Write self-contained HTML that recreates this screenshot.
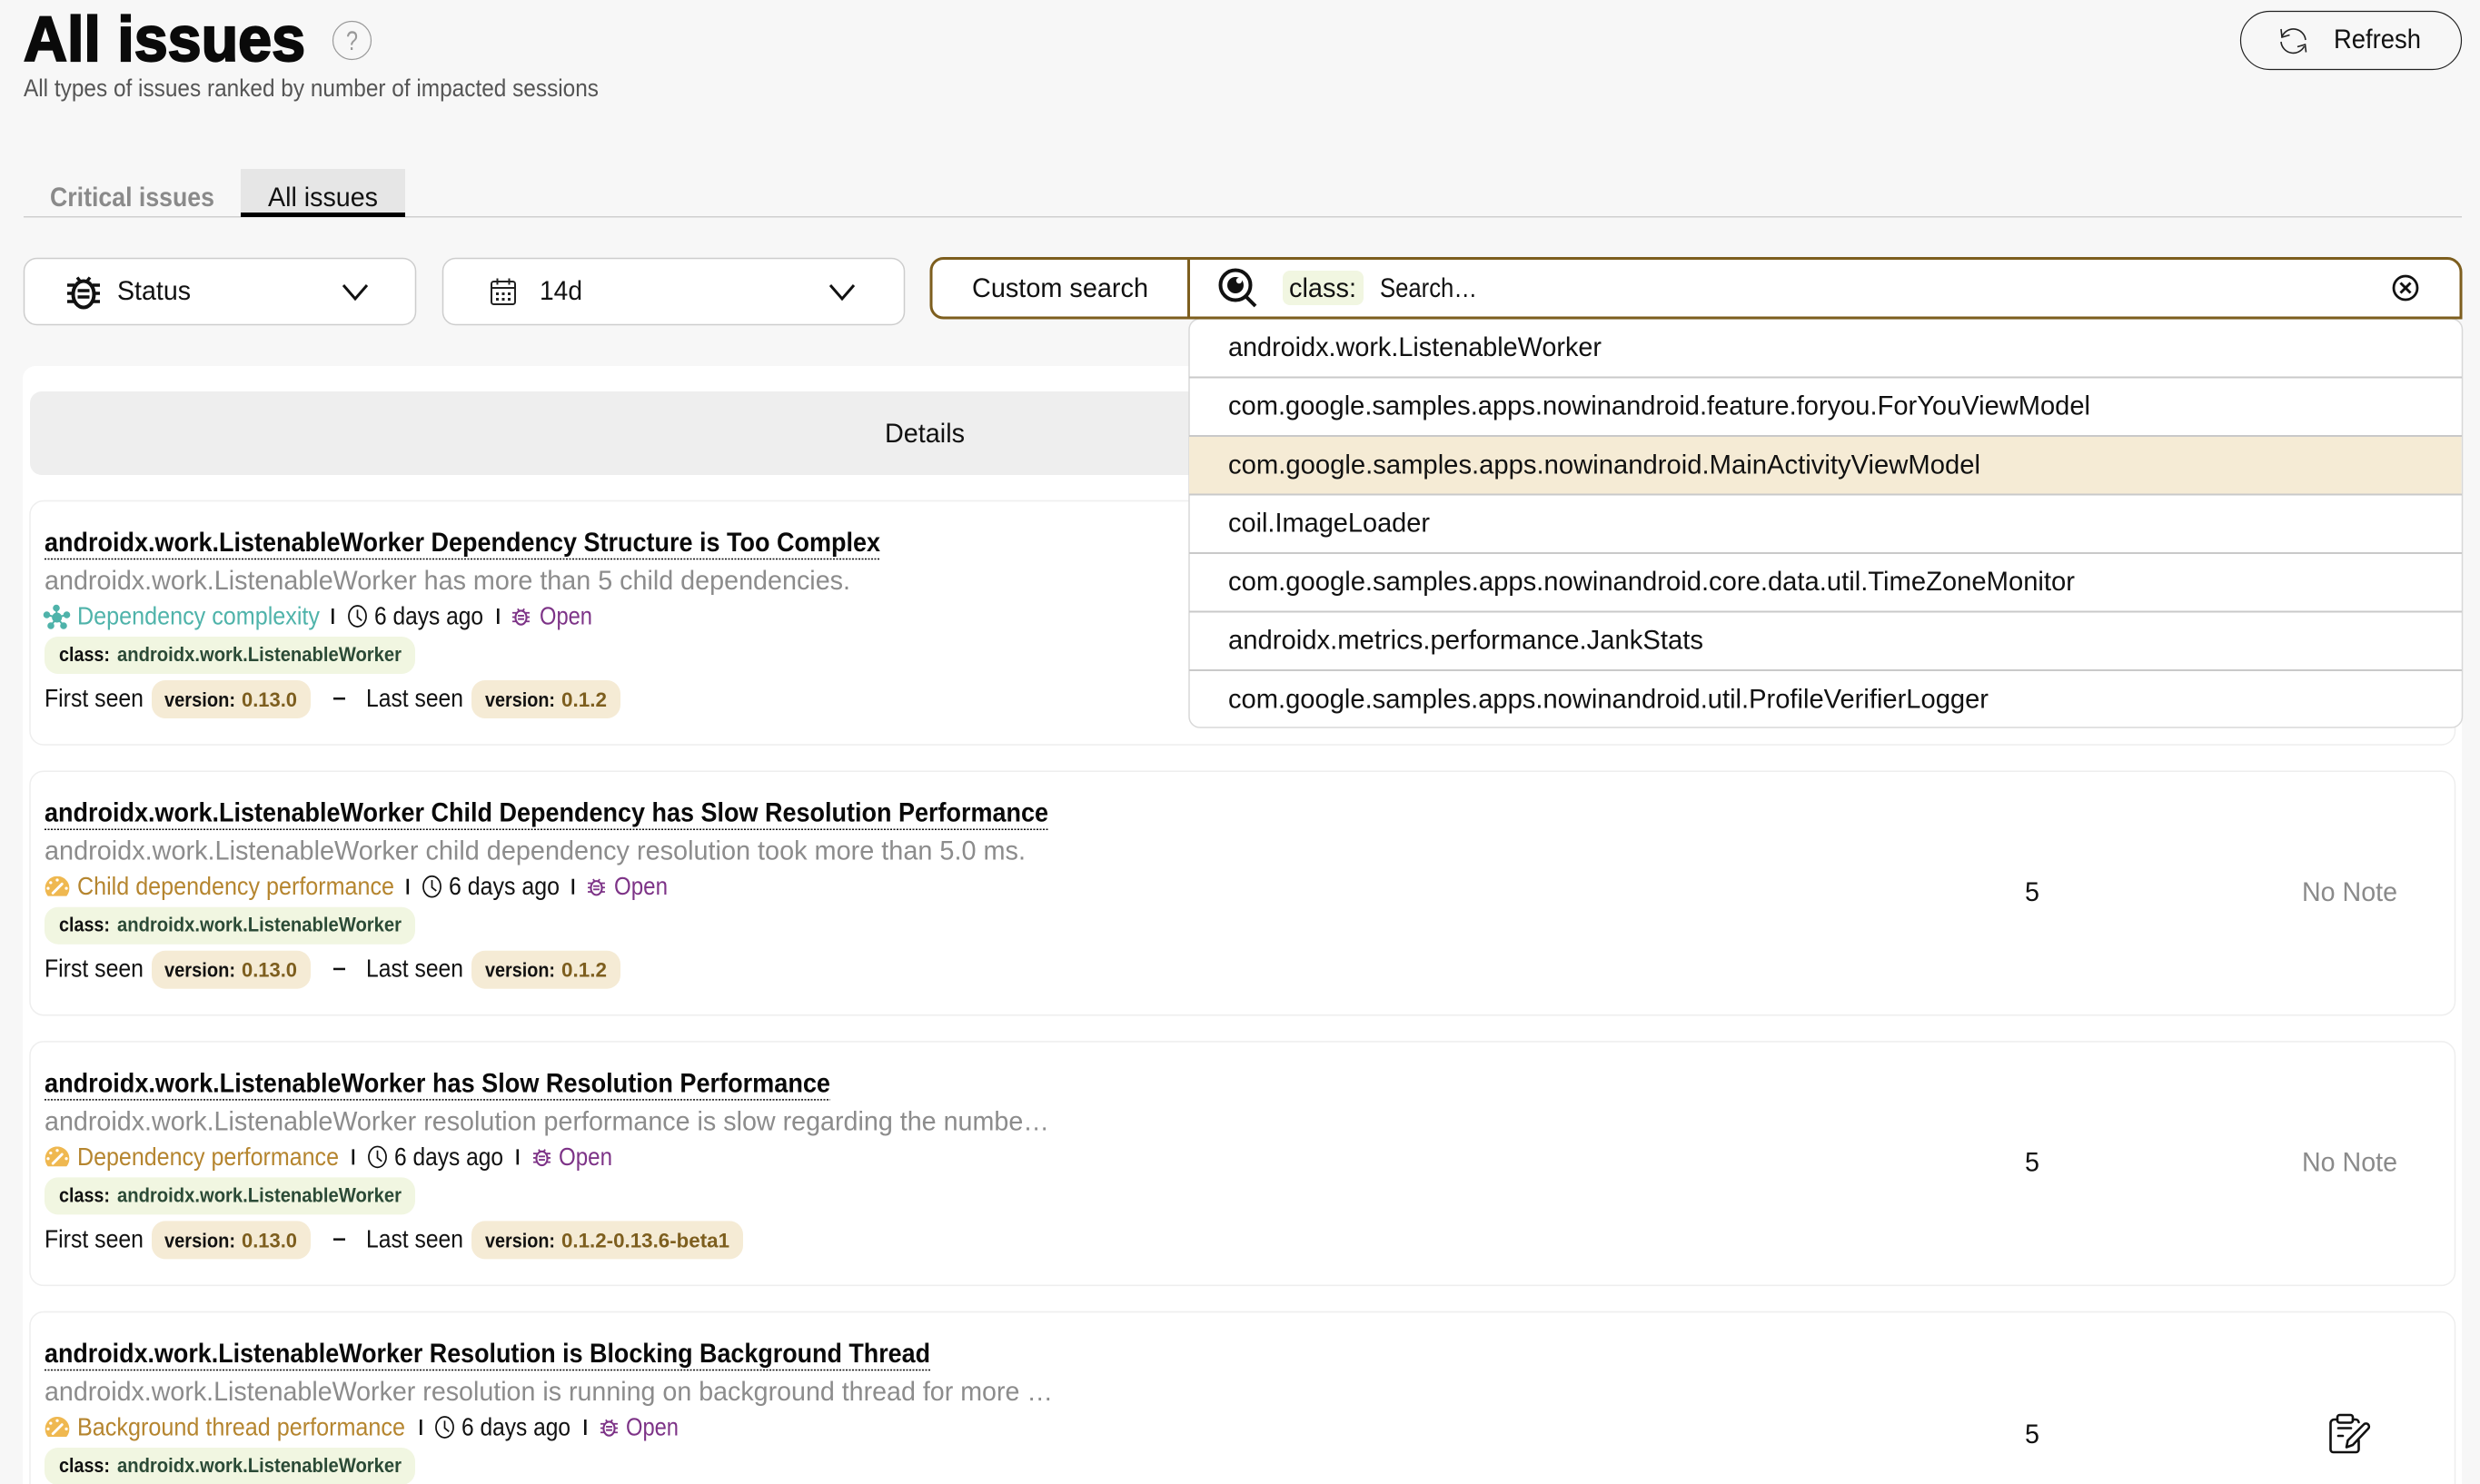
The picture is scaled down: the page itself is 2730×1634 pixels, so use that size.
<!DOCTYPE html>
<html lang="en">
<head>
<meta charset="utf-8">
<title>All issues</title>
<style>
html,body{margin:0;padding:0;background:#f7f7f7;width:2730px;height:1634px;overflow:hidden}
svg{display:block}
text{font-family:"Liberation Sans",sans-serif;font-size:29.500px;fill:#111;white-space:pre}
.g{fill:#8a8a8a}
.t{font-size:29.500px;font-weight:700;fill:#0a0a0a}
.d{font-size:29.500px;fill:#8c8c8c}
.m{font-size:27.500px}
.s{font-size:27.500px}
.c{font-size:22.500px;font-weight:700;fill:#111}
.cv{font-size:22.500px;font-weight:700;fill:#2b4a36}
.vv{font-size:22.500px;font-weight:700;fill:#7d5e1e}
.teal{fill:#4fb3aa}
.org{fill:#b5852f}
.pur{fill:#7d3387}
</style>
</head>
<body>
<svg width="2730" height="1634" viewBox="0 0 2730 1634" xmlns="http://www.w3.org/2000/svg">
<defs>
<symbol id="bug" viewBox="0 0 36 38">
  <ellipse cx="18" cy="21" rx="11.500" ry="14.500" fill="none" stroke="currentColor" stroke-width="4"/>
  <path d="M11 2.500l3.500 4.500M25 2.500l-3.500 4.500M0 11h8M28 11h8M0 20h7M29 20h7M0 29h8M28 29h8" stroke="currentColor" stroke-width="3.400" fill="none"/>
  <path d="M11.500 17h13M11.500 24h13" stroke="currentColor" stroke-width="3.600" fill="none"/>
</symbol>
<symbol id="clock" viewBox="0 0 22 28">
  <ellipse cx="11" cy="14" rx="10" ry="12" fill="none" stroke="#111" stroke-width="1.800"/>
  <path d="M11 6.500V15l5 4" fill="none" stroke="#111" stroke-width="1.800"/>
</symbol>
<symbol id="gauge" viewBox="0 0 28 23">
  <path d="M3.300 23A14 14 0 1 1 24.700 23Z" fill="#efb850"/>
  <path d="M9 19.500L19.500 9" stroke="#fff" stroke-width="3" stroke-linecap="round"/>
  <circle cx="14" cy="4.500" r="1.700" fill="#fff"/>
  <circle cx="6.500" cy="7.500" r="1.700" fill="#fff"/>
  <circle cx="3.500" cy="14" r="1.700" fill="#fff"/>
  <circle cx="24.500" cy="14" r="1.700" fill="#fff"/>
</symbol>
<g id="seen">
  <text class="s" x="49" y="778" textLength="109" lengthAdjust="spacingAndGlyphs">First seen</text>
  <rect x="167" y="749" width="175" height="42" rx="15" fill="#f5ebd5"/>
  <text class="c" x="181" y="778" textLength="78" lengthAdjust="spacingAndGlyphs">version:</text>
  <text class="vv" x="266" y="778" textLength="61" lengthAdjust="spacingAndGlyphs">0.13.0</text>
  <rect x="367" y="768" width="13" height="2.500" fill="#111"/>
  <text class="s" x="403" y="778" textLength="107" lengthAdjust="spacingAndGlyphs">Last seen</text>
</g>
<g id="classchip">
  <rect x="49" y="701" width="408" height="41" rx="15" fill="#f1f6e1"/>
  <text class="c" x="65" y="728" textLength="56" lengthAdjust="spacingAndGlyphs">class:</text>
  <text class="cv" x="129" y="728" textLength="313" lengthAdjust="spacingAndGlyphs">androidx.work.ListenableWorker</text>
</g>
</defs>

<!-- Header -->
<text x="26" y="67" textLength="310" lengthAdjust="spacingAndGlyphs" style="font-size:70px;font-weight:700;fill:#0a0a0a;stroke:#0a0a0a;stroke-width:2.200px">All issues</text>
<ellipse cx="387.500" cy="44.500" rx="21" ry="21" fill="none" stroke="#9a9a9a" stroke-width="1.200"/>
<text x="381" y="55" textLength="13" lengthAdjust="spacingAndGlyphs" style="font-size:30px;fill:#999">?</text>
<text x="26" y="106" textLength="633" lengthAdjust="spacingAndGlyphs" style="font-size:27px;fill:#555">All types of issues ranked by number of impacted sessions</text>

<rect x="2466.500" y="12.500" width="243" height="64" rx="32" fill="#f7f7f7" stroke="#222" stroke-width="1.200"/>
<g fill="none" stroke="#222" stroke-width="1.600">
  <path d="M2512 40.500A13.500 13.500 0 0 1 2538 44"/>
  <path d="M2511 32l1 9 8.500-2.500"/>
  <path d="M2511 46A13.500 13.500 0 0 0 2536.500 51"/>
  <path d="M2538.500 57.500l-1-8.500-8.500 2.500"/>
</g>
<text x="2569" y="53" textLength="96" lengthAdjust="spacingAndGlyphs">Refresh</text>

<!-- Tabs -->
<rect x="26" y="238" width="2684" height="1.500" fill="#cfcfcf"/>
<rect x="265" y="186" width="181" height="48" fill="#e6e6e6"/>
<rect x="265" y="234" width="181" height="5" fill="#000"/>
<text x="55" y="227" textLength="181" lengthAdjust="spacingAndGlyphs" style="font-weight:700;fill:#8a8a8a">Critical issues</text>
<text x="295" y="227" textLength="121" lengthAdjust="spacingAndGlyphs">All issues</text>

<!-- Filter: Status -->
<rect x="26.500" y="284.500" width="431" height="73" rx="14" fill="#fff" stroke="#cdcdcd" stroke-width="1.500"/>
<svg x="74" y="303" width="36" height="38" viewBox="0 0 36 38" color="#111"><use href="#bug"/></svg>
<text x="129" y="330" textLength="81" lengthAdjust="spacingAndGlyphs">Status</text>
<path d="M378 314l13 15 13-15" fill="none" stroke="#111" stroke-width="3"/>

<!-- Filter: 14d -->
<rect x="487.500" y="284.500" width="508" height="73" rx="14" fill="#fff" stroke="#cdcdcd" stroke-width="1.500"/>
<g fill="none" stroke="#222" stroke-width="2">
  <rect x="541" y="310" width="26" height="25" rx="2.500"/>
  <path d="M541 317h26M547.500 306.500v7M560.500 306.500v7"/>
</g>
<g fill="#222">
  <rect x="546" y="322" width="3" height="3"/><rect x="552.500" y="322" width="3" height="3"/><rect x="559" y="322" width="3" height="3"/>
  <rect x="546" y="328" width="3" height="3"/><rect x="552.500" y="328" width="3" height="3"/><rect x="559" y="328" width="3" height="3"/>
</g>
<text x="594" y="330" textLength="47" lengthAdjust="spacingAndGlyphs">14d</text>
<path d="M914 314l13 15 13-15" fill="none" stroke="#111" stroke-width="3"/>

<!-- Main panel -->
<path d="M25 1634V417a14 14 0 0 1 14-14H2710V1634Z" fill="#fff"/>
<rect x="33" y="431" width="2670" height="92" rx="13" fill="#eeeeee"/>
<text x="974" y="487" textLength="88" lengthAdjust="spacingAndGlyphs">Details</text>

<!-- Row 1 -->
<rect x="33" y="551.500" width="2669.500" height="268.500" rx="15" fill="#fff" stroke="#eeeeee" stroke-width="1.500"/>
<text class="t" x="49" y="607" textLength="920" lengthAdjust="spacingAndGlyphs">androidx.work.ListenableWorker Dependency Structure is Too Complex</text>
<path d="M49 615.500H968" stroke="#111" stroke-width="1.500" stroke-dasharray="2 1.500"/>
<text class="d" x="49" y="649" textLength="887" lengthAdjust="spacingAndGlyphs">androidx.work.ListenableWorker has more than 5 child dependencies.</text>
<g fill="#4fb3aa" stroke="#4fb3aa" stroke-width="2">
  <path d="M62.700 680L62 670M62.700 680L73 677M62.700 680L70 689M62.700 680L56 689M62.700 680L52 677" fill="none"/>
  <circle cx="62.700" cy="680" r="4.500"/>
  <circle cx="62" cy="669.500" r="2.800"/><circle cx="73.500" cy="677" r="2.800"/><circle cx="70" cy="689" r="2.800"/><circle cx="56" cy="689" r="2.800"/><circle cx="51.500" cy="677" r="2.800"/>
</g>
<text class="m teal" x="85" y="687.500" textLength="267" lengthAdjust="spacingAndGlyphs">Dependency complexity</text>
<rect x="365" y="670" width="2.600" height="17" fill="#111"/>
<svg x="383" y="665" width="21" height="27" viewBox="0 0 22 28"><use href="#clock"/></svg>
<text class="m" x="412" y="687.500" textLength="120" lengthAdjust="spacingAndGlyphs">6 days ago</text>
<rect x="547" y="670" width="2.600" height="17" fill="#111"/>
<svg x="564" y="669" width="19" height="20" viewBox="0 0 36 38" color="#7d3387"><use href="#bug"/></svg>
<text class="m pur" x="594" y="687.500" textLength="58" lengthAdjust="spacingAndGlyphs">Open</text>
<use href="#classchip"/>
<use href="#seen"/>
<rect x="519" y="749" width="164" height="42" rx="15" fill="#f5ebd5"/>
<text class="c" x="534" y="778" textLength="77" lengthAdjust="spacingAndGlyphs">version:</text>
<text class="vv" x="618" y="778" textLength="50" lengthAdjust="spacingAndGlyphs">0.1.2</text>

<!-- Row 2 -->
<g transform="translate(0,297.700)">
<rect x="33" y="551.500" width="2669.500" height="268.500" rx="15" fill="#fff" stroke="#eeeeee" stroke-width="1.500"/>
<text class="t" x="49" y="607" textLength="1105" lengthAdjust="spacingAndGlyphs">androidx.work.ListenableWorker Child Dependency has Slow Resolution Performance</text>
<path d="M49 615.500H1154" stroke="#111" stroke-width="1.500" stroke-dasharray="2 1.500"/>
<text class="d" x="49" y="649" textLength="1080" lengthAdjust="spacingAndGlyphs">androidx.work.ListenableWorker child dependency resolution took more than 5.0 ms.</text>
<svg x="49" y="667" width="28" height="22" viewBox="0 0 28 23"><use href="#gauge"/></svg>
<text class="m org" x="85" y="687.500" textLength="349" lengthAdjust="spacingAndGlyphs">Child dependency performance</text>
<rect x="447.500" y="670" width="2.600" height="17" fill="#111"/>
<svg x="465" y="665" width="21" height="27" viewBox="0 0 22 28"><use href="#clock"/></svg>
<text class="m" x="494" y="687.500" textLength="122" lengthAdjust="spacingAndGlyphs">6 days ago</text>
<rect x="629.500" y="670" width="2.600" height="17" fill="#111"/>
<svg x="647" y="669" width="19" height="20" viewBox="0 0 36 38" color="#7d3387"><use href="#bug"/></svg>
<text class="m pur" x="676" y="687.500" textLength="59" lengthAdjust="spacingAndGlyphs">Open</text>
<use href="#classchip"/>
<use href="#seen"/>
<rect x="519" y="749" width="164" height="42" rx="15" fill="#f5ebd5"/>
<text class="c" x="534" y="778" textLength="77" lengthAdjust="spacingAndGlyphs">version:</text>
<text class="vv" x="618" y="778" textLength="50" lengthAdjust="spacingAndGlyphs">0.1.2</text>
<text x="2229" y="694.300" textLength="16" lengthAdjust="spacingAndGlyphs">5</text>
<text class="g" x="2534" y="694.300" textLength="105" lengthAdjust="spacingAndGlyphs">No Note</text>
</g>

<!-- Row 3 -->
<g transform="translate(0,595.400)">
<rect x="33" y="551.500" width="2669.500" height="268.500" rx="15" fill="#fff" stroke="#eeeeee" stroke-width="1.500"/>
<text class="t" x="49" y="607" textLength="865" lengthAdjust="spacingAndGlyphs">androidx.work.ListenableWorker has Slow Resolution Performance</text>
<path d="M49 615.500H914" stroke="#111" stroke-width="1.500" stroke-dasharray="2 1.500"/>
<text class="d" x="49" y="649" textLength="1106" lengthAdjust="spacingAndGlyphs">androidx.work.ListenableWorker resolution performance is slow regarding the numbe…</text>
<svg x="49" y="667" width="28" height="22" viewBox="0 0 28 23"><use href="#gauge"/></svg>
<text class="m org" x="85" y="687.500" textLength="288" lengthAdjust="spacingAndGlyphs">Dependency performance</text>
<rect x="387.500" y="670" width="2.600" height="17" fill="#111"/>
<svg x="405" y="665" width="21" height="27" viewBox="0 0 22 28"><use href="#clock"/></svg>
<text class="m" x="434" y="687.500" textLength="120" lengthAdjust="spacingAndGlyphs">6 days ago</text>
<rect x="568.500" y="670" width="2.600" height="17" fill="#111"/>
<svg x="587" y="669" width="19" height="20" viewBox="0 0 36 38" color="#7d3387"><use href="#bug"/></svg>
<text class="m pur" x="615" y="687.500" textLength="59" lengthAdjust="spacingAndGlyphs">Open</text>
<use href="#classchip"/>
<use href="#seen"/>
<rect x="519" y="749" width="299" height="42" rx="15" fill="#f5ebd5"/>
<text class="c" x="534" y="778" textLength="77" lengthAdjust="spacingAndGlyphs">version:</text>
<text class="vv" x="618" y="778" textLength="185" lengthAdjust="spacingAndGlyphs">0.1.2-0.13.6-beta1</text>
<text x="2229" y="694.300" textLength="16" lengthAdjust="spacingAndGlyphs">5</text>
<text class="g" x="2534" y="694.300" textLength="105" lengthAdjust="spacingAndGlyphs">No Note</text>
</g>

<!-- Row 4 -->
<g transform="translate(0,893)">
<rect x="33" y="551.500" width="2669.500" height="268.500" rx="15" fill="#fff" stroke="#eeeeee" stroke-width="1.500"/>
<text class="t" x="49" y="607" textLength="975" lengthAdjust="spacingAndGlyphs">androidx.work.ListenableWorker Resolution is Blocking Background Thread</text>
<path d="M49 615.500H1024" stroke="#111" stroke-width="1.500" stroke-dasharray="2 1.500"/>
<text class="d" x="49" y="649" textLength="1110" lengthAdjust="spacingAndGlyphs">androidx.work.ListenableWorker resolution is running on background thread for more …</text>
<svg x="49" y="667" width="28" height="22" viewBox="0 0 28 23"><use href="#gauge"/></svg>
<text class="m org" x="85" y="687.500" textLength="361" lengthAdjust="spacingAndGlyphs">Background thread performance</text>
<rect x="462" y="670" width="2.600" height="17" fill="#111"/>
<svg x="479" y="665" width="21" height="27" viewBox="0 0 22 28"><use href="#clock"/></svg>
<text class="m" x="508" y="687.500" textLength="120" lengthAdjust="spacingAndGlyphs">6 days ago</text>
<rect x="643" y="670" width="2.600" height="17" fill="#111"/>
<svg x="661" y="669" width="19" height="20" viewBox="0 0 36 38" color="#7d3387"><use href="#bug"/></svg>
<text class="m pur" x="689" y="687.500" textLength="58" lengthAdjust="spacingAndGlyphs">Open</text>
<use href="#classchip"/>
<text x="2229" y="696" textLength="16" lengthAdjust="spacingAndGlyphs">5</text>
</g>
<g fill="none" stroke="#111" stroke-width="2.600" stroke-linejoin="round" stroke-linecap="round">
  <path d="M2573 1563h-3.500a4 4 0 0 0-4 4v29a3 3 0 0 0 3 3h25a3 3 0 0 0 3-3v-10"/>
  <path d="M2596.500 1566a3.500 3.500 0 0 0-3.500-3h-3"/>
  <rect x="2573" y="1558" width="17" height="8.500" rx="2.500"/>
  <path d="M2574 1572.500h14M2574 1581h5"/>
  <path d="M2583 1593.500l1.500-7.500 17.500-17.500a3 3 0 0 1 5 4.500l-17 18Z"/>
</g>

<!-- Custom search -->
<rect x="1309" y="351" width="1401.500" height="450" rx="12" fill="#fff" stroke="#d8d8d8" stroke-width="1.500"/>
<rect x="1309" y="480" width="1400.500" height="64" fill="#f5ebd5"/>
<rect x="1309" y="414.500" width="1401" height="2" fill="#c9c9c9"/>
<rect x="1309" y="479" width="1401" height="2" fill="#c9c9c9"/>
<rect x="1309" y="543.500" width="1401" height="2" fill="#c9c9c9"/>
<rect x="1309" y="608" width="1401" height="2" fill="#c9c9c9"/>
<rect x="1309" y="672.500" width="1401" height="2" fill="#c9c9c9"/>
<rect x="1309" y="737" width="1401" height="2" fill="#c9c9c9"/>
<text x="1352" y="392" textLength="411" lengthAdjust="spacingAndGlyphs">androidx.work.ListenableWorker</text>
<text x="1352" y="456.500" textLength="949" lengthAdjust="spacingAndGlyphs">com.google.samples.apps.nowinandroid.feature.foryou.ForYouViewModel</text>
<text x="1352" y="521.500" textLength="828" lengthAdjust="spacingAndGlyphs">com.google.samples.apps.nowinandroid.MainActivityViewModel</text>
<text x="1352" y="585.500" textLength="222" lengthAdjust="spacingAndGlyphs">coil.ImageLoader</text>
<text x="1352" y="650" textLength="932" lengthAdjust="spacingAndGlyphs">com.google.samples.apps.nowinandroid.core.data.util.TimeZoneMonitor</text>
<text x="1352" y="714.500" textLength="523" lengthAdjust="spacingAndGlyphs">androidx.metrics.performance.JankStats</text>
<text x="1352" y="779.500" textLength="837" lengthAdjust="spacingAndGlyphs">com.google.samples.apps.nowinandroid.util.ProfileVerifierLogger</text>

<path d="M1025 298a13.500 13.500 0 0 1 13.500-13.500H2694a15 15 0 0 1 15 15V350H1038.500A13.500 13.500 0 0 1 1025 336.500Z" fill="#fff" stroke="#7d5e1e" stroke-width="3"/>
<rect x="1307" y="284" width="3" height="67" fill="#7d5e1e"/>
<text x="1070" y="327" textLength="194" lengthAdjust="spacingAndGlyphs">Custom search</text>
<g>
  <circle cx="1360" cy="314" r="16.500" fill="none" stroke="#111" stroke-width="4"/>
  <circle cx="1360" cy="314" r="9" fill="#111"/>
  <circle cx="1364" cy="309" r="3.200" fill="#fff"/>
  <path d="M1372 327l10 10" stroke="#111" stroke-width="4"/>
</g>
<rect x="1412" y="298" width="89" height="38" rx="8" fill="#f1f6e1"/>
<text x="1419" y="327" textLength="74" lengthAdjust="spacingAndGlyphs">class:</text>
<text x="1519" y="327" textLength="107" lengthAdjust="spacingAndGlyphs">Search…</text>
<circle cx="2648" cy="317" r="13" fill="none" stroke="#111" stroke-width="2.800"/>
<path d="M2642.500 311.500l11 11M2653.500 311.500l-11 11" stroke="#111" stroke-width="3"/>
</svg>
</body>
</html>
